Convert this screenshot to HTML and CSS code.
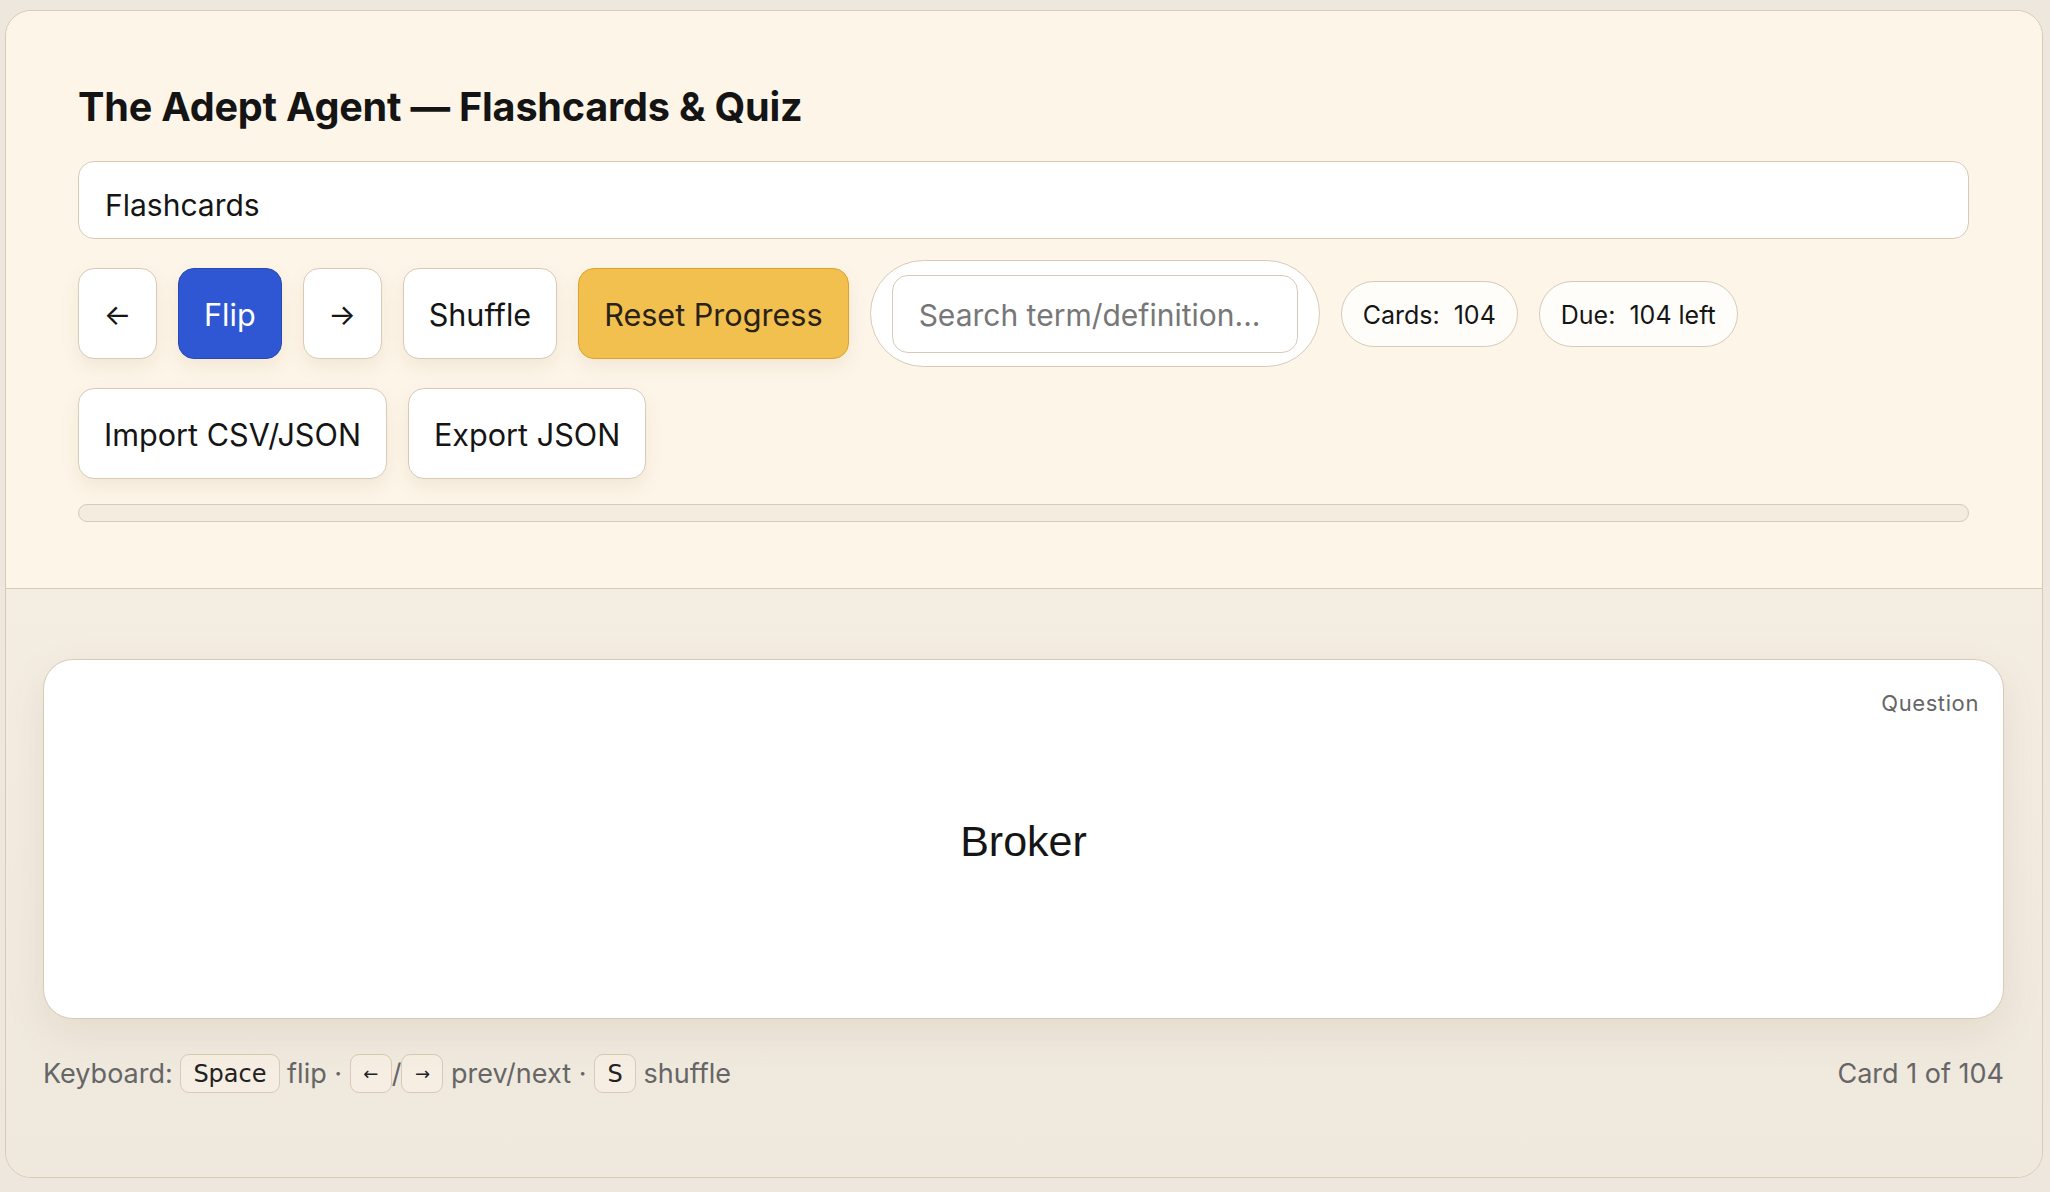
FILE: index.html
```html
<!DOCTYPE html>
<html lang="en">
<head>
<meta charset="utf-8">
<title>The Adept Agent — Flashcards &amp; Quiz</title>
<link rel="stylesheet" href="styles.css">
</head>
<body>
<div class="app">
  <header class="top">
    <h1 class="title">The Adept Agent — Flashcards &amp; Quiz</h1>
    <div class="select">Flashcards</div>
    <div class="controls">
      <button class="btn btn-icon">←</button>
      <button class="btn btn-primary">Flip</button>
      <button class="btn btn-icon">→</button>
      <button class="btn">Shuffle</button>
      <button class="btn btn-warn">Reset Progress</button>
      <div class="search-wrap"><div class="search">Search term/definition...</div></div>
      <span class="pill">Cards:&nbsp; 104</span>
      <span class="pill">Due:&nbsp; 104 left</span>
    </div>
    <div class="controls">
      <button class="btn">Import CSV/JSON</button>
      <button class="btn">Export JSON</button>
    </div>
    <div class="progress"><div class="progress-fill"></div></div>
  </header>
  <main class="stage">
    <div class="card">
      <span class="card-label">Question</span>
      <div class="card-text">Broker</div>
    </div>
    <div class="footer">
      <div class="hint">Keyboard: <kbd>Space</kbd> flip · <kbd class="k-sm">←</kbd>/<kbd class="k-sm">→</kbd> prev/next · <kbd class="k-key">S</kbd> shuffle</div>
      <div class="count">Card 1 of 104</div>
    </div>
  </main>
</div>
</body>
</html>
```

FILE: styles.css
```css
* { box-sizing: border-box; }
html, body { margin: 0; padding: 0; }
body {
  background: #ede7dd;
  font-family: Inter, "Noto Sans", sans-serif;
  color: #151515;
  height: 1192px;
  overflow: hidden;
}
.app {
  margin: 10px 7px 0 5px;
  height: 1168px;
  border: 1px solid #d8cab6;
  border-radius: 26px;
  overflow: hidden;
  display: flex;
  flex-direction: column;
  background: #f2ebe0;
}
.top {
  background: #fdf5e8;
  border-bottom: 1px solid #d8cab6;
  padding: 73px 73px 66px 72px;
  display: flex;
  flex-direction: column;
}
.title {
  margin: 0;
  font-size: 39.6px;
  line-height: 46px;
  font-weight: 700;
  letter-spacing: -0.2px;
  color: #141414;
}
.select {
  margin-top: 31px;
  height: 78px;
  background: #fff;
  border: 1px solid #d8cab6;
  border-radius: 16px;
  padding: 10px 26px 0;
  display: flex;
  align-items: center;
  font-size: 30px;
  color: #151515;
}
.controls {
  margin-top: 21px;
  display: flex;
  align-items: center;
  gap: 21px;
}
.btn {
  font-family: inherit;
  font-size: 30.6px;
  line-height: 37px;
  padding: 27px 25px 25px;
  background: #fff;
  color: #151515;
  border: 1px solid #d8cab6;
  border-radius: 16px;
  box-shadow: 0 8px 18px rgba(150, 120, 70, 0.10);
  cursor: pointer;
}
.btn-icon { width: 79px; padding-left: 0; padding-right: 0; font-size: 29px; }
.btn-primary {
  background: #2f57d3;
  border-color: #2848b4;
  color: #fff;
}
.btn-warn {
  background: #f2c04e;
  border-color: #dba32c;
  color: #2a2218;
}
.search-wrap {
  height: 107px;
  padding: 14px 21px;
  border: 1px solid #d8cab6;
  border-radius: 54px;
  background: #fff;
}
.search {
  width: 406px;
  height: 78px;
  border: 1px solid #d8cab6;
  border-radius: 16px;
  padding: 2px 26px 0;
  display: flex;
  align-items: center;
  font-size: 30px;
  color: #777;
}
.pill {
  height: 66px;
  padding: 2px 21px 0;
  border: 1px solid #d8cab6;
  border-radius: 33px;
  background: #fffdf9;
  display: flex;
  align-items: center;
  font-size: 25px;
  color: #151515;
}
.progress {
  margin-top: 25px;
  height: 18px;
  border: 1px solid #d8cab6;
  border-radius: 9px;
  background: #f4ecdf;
  overflow: hidden;
}
.progress-fill { width: 0; height: 100%; background: #2f57d3; }
.stage {
  flex: 1;
  padding: 70px 38px 0 37px;
  background: linear-gradient(#f4ede2, #efe8dd);
  display: flex;
  flex-direction: column;
}
.card {
  position: relative;
  height: 360px;
  background: #fff;
  border: 1px solid #d8cab6;
  border-radius: 30px;
  box-shadow: 0 14px 40px rgba(120, 95, 60, 0.10);
  display: flex;
  align-items: center;
  justify-content: center;
}
.card-label {
  position: absolute;
  top: 30px;
  right: 24px;
  font-size: 22px;
  letter-spacing: 0.6px;
  color: #666;
}
.card-text {
  font-size: 43px;
  padding-top: 4px;
  color: #151515;
  font-family: "Liberation Sans", Inter, sans-serif;
}
.footer {
  margin-top: 35px;
  display: flex;
  justify-content: space-between;
  align-items: center;
  font-size: 27px;
  color: #666;
}
.hint { display: flex; align-items: center; white-space: pre; }
kbd {
  display: inline-flex;
  align-items: center;
  justify-content: center;
  height: 39px;
  padding: 0 12px;
  border: 1px solid #d8cab6;
  border-radius: 9px;
  background: #f6eee2;
  font-family: "DejaVu Sans", sans-serif;
  font-size: 24px;
  color: #222;
}
kbd.k-sm { width: 42px; padding: 0; font-size: 18px; }
kbd.k-key { width: 42px; padding: 0; }
.count { font-size: 27px; color: #666; }
```
